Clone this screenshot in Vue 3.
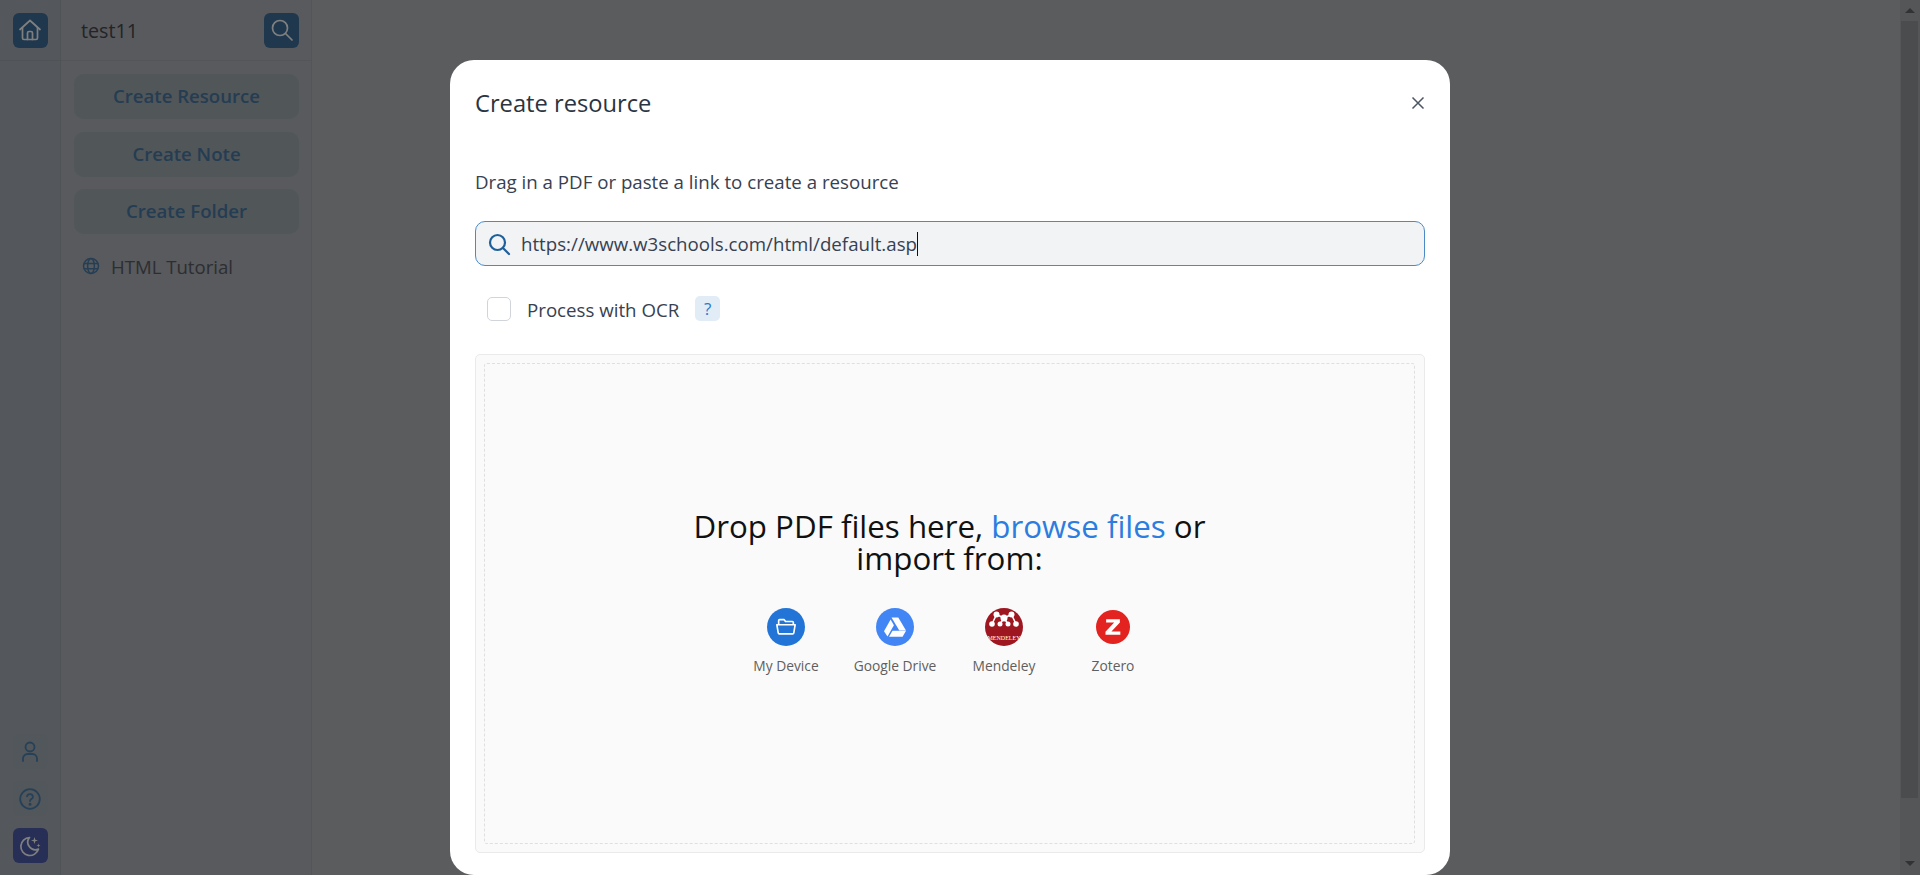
<template>
  <div class="page">
    <!-- left icon rail -->
    <aside class="rail">
      <div class="rail-top">
        <button class="rail-btn solid" aria-label="Home">
          <svg viewBox="0 0 24 24" width="24" height="24" fill="none" stroke="#fff" stroke-width="1.7" stroke-linejoin="round" stroke-linecap="round">
            <path d="M2 11.5 12 2.500l10 9" />
            <path d="M4.500 9.500V20a1.500 1.500 0 0 0 1.500 1.500h12a1.500 1.500 0 0 0 1.500-1.500V9.500" />
            <path d="M9.500 21.500V15a1.500 1.500 0 0 1 1.500-1.500h2a1.500 1.500 0 0 1 1.500 1.500v6.500" />
          </svg>
        </button>
      </div>
      <div class="rail-bottom">
        <button class="rail-btn soft" aria-label="Account">
          <svg viewBox="0 0 24 24" width="24" height="24" fill="none" stroke="#4d80ae" stroke-width="1.8" stroke-linecap="round">
            <circle cx="12" cy="7" r="4.500" />
            <path d="M5 21v-2.500A4.500 4.500 0 0 1 9.500 14h5a4.500 4.500 0 0 1 4.500 4.500V21" />
          </svg>
        </button>
        <button class="rail-btn soft" aria-label="Help">
          <svg viewBox="0 0 24 24" width="24" height="24" fill="none" stroke="#4d80ae" stroke-width="1.8" stroke-linecap="round">
            <circle cx="12" cy="12" r="9.800" />
            <path d="M9 9.300a3 3 0 0 1 5.900.6c0 2-2.900 2.300-2.900 4.100" />
            <circle cx="12" cy="17.200" r=".6" fill="#4d80ae" />
          </svg>
        </button>
        <button class="rail-btn moon" aria-label="Theme">
          <svg viewBox="0 0 24 24" width="24" height="24" fill="none" stroke="#fff" stroke-width="1.700" stroke-linejoin="round">
            <path d="M11.500 3.500a9 9 0 1 0 9 11.500 7.500 7.500 0 0 1-9-11.500Z" />
            <path d="M16.500 3l.8 2.700 2.700.8-2.700.8-.8 2.700-.8-2.700-2.700-.8 2.700-.8Z" fill="#fff" stroke="none" />
            <path d="M20.500 9.500l.5 1.500 1.500.5-1.500.5-.5 1.500-.5-1.500-1.500-.5 1.500-.5Z" fill="#fff" stroke="none" />
          </svg>
        </button>
      </div>
    </aside>

    <!-- library column -->
    <aside class="library">
      <header class="lib-head">
        <span class="lib-name">test11</span>
        <button class="rail-btn solid" aria-label="Search">
          <svg viewBox="0 0 24 24" width="24" height="24" fill="none" stroke="#fff" stroke-width="1.700" stroke-linecap="round">
            <circle cx="10" cy="10" r="7.500" />
            <path d="m15.500 15.500 6.500 6.500" />
          </svg>
        </button>
      </header>
      <div class="lib-body">
        <button v-for="label in actions" :key="label" class="lib-action">{{ label }}</button>
        <div class="lib-item">
          <svg viewBox="0 0 24 24" width="18" height="18" fill="none" stroke="#4a7ca8" stroke-width="2">
            <circle cx="12" cy="12" r="10" />
            <ellipse cx="12" cy="12" rx="4.500" ry="10" />
            <path d="M2.500 8.500h19M2.500 15.500h19" />
          </svg>
          <span>HTML Tutorial</span>
        </div>
      </div>
    </aside>

    <main class="content"></main>
    <div class="scrollbar">
      <span class="arrow up"></span>
      <span class="thumb"></span>
      <span class="arrow down"></span>
    </div>

    <div class="overlay">
      <section class="modal">
        <header class="modal-head">
          <h2>Create resource</h2>
          <button class="close" aria-label="Close">
            <svg viewBox="0 0 14 14" width="14" height="14" fill="none" stroke="#4b5563" stroke-width="1.500">
              <path d="m1.500 1.500 11 11M12.500 1.500l-11 11" />
            </svg>
          </button>
        </header>

        <p class="hint">Drag in a PDF or paste a link to create a resource</p>

        <div class="url-field">
          <svg viewBox="0 0 24 24" width="24" height="24" fill="none" stroke="#1f5f99" stroke-width="2.200" stroke-linecap="round">
            <circle cx="10.500" cy="10.500" r="7.500" />
            <path d="m16 16 6 6" />
          </svg>
          <span class="url-text">https://www.w3schools.com/html/default.asp</span><span class="caret"></span>
        </div>

        <label class="ocr">
          <span class="check"></span>
          <span class="ocr-text">Process with OCR</span>
          <span class="help">?</span>
        </label>

        <div class="dashboard">
          <div class="drop">
            <div class="drop-title">
              Drop PDF files here, <span class="browse">browse files</span> or import from:
            </div>
            <div class="sources">
              <div class="source">
                <span class="badge device">
                  <svg viewBox="0 0 24 24" width="22" height="22" fill="none" stroke="#fff" stroke-width="1.800" stroke-linejoin="round">
                    <path d="M4 9.500V5a1 1 0 0 1 1-1h5l1.500 2H19a1 1 0 0 1 1 1v2.500" />
                    <path d="M2 9.500h20l-1.500 9a1.200 1.200 0 0 1-1.200 1H4.700a1.200 1.200 0 0 1-1.200-1Z" />
                  </svg>
                </span>
                <span class="source-name">My Device</span>
              </div>
              <div class="source">
                <span class="badge drive">
                  <svg viewBox="0 0 24 24" width="24" height="24" fill="#fff">
                    <path d="M8.500 2.500h6.800l7.700 13h-6.700Z" />
                    <path d="M1 16.200 7.600 4.600l3.300 5.700L4.500 21.500Z" />
                    <path d="M9.500 15.800H23l-3.400 5.900H6Z" />
                  </svg>
                </span>
                <span class="source-name">Google Drive</span>
              </div>
              <div class="source">
                <span class="badge mendeley">
                  <svg viewBox="0 0 38 38" width="38" height="38" fill="#fff">
                    <circle cx="19" cy="14" r="3.500" />
                    <circle cx="11.500" cy="10.500" r="3" />
                    <circle cx="26.500" cy="10.500" r="3" />
                    <circle cx="7" cy="20" r="2.800" />
                    <circle cx="31" cy="20" r="2.800" />
                    <circle cx="15" cy="20" r="2.500" />
                    <circle cx="23" cy="20" r="2.500" />
                    <path d="m11.500 10.500 7.500 3.500 7.500-3.500M11.500 10.500 7 20M26.500 10.500 31 20M19 14l-4 6M19 14l4 6" stroke="#fff" stroke-width="1.600" fill="none" />
                  </svg>
                  <span class="mendeley-word">MENDELEY</span>
                </span>
                <span class="source-name">Mendeley</span>
              </div>
              <div class="source">
                <span class="badge zotero">
                  <svg viewBox="0 0 24 24" width="22" height="22" fill="#fff">
                    <path d="M4.500 3.500h15v3.600L10.300 17h9.700v3.500H3.800v-3.300L13.300 7H4.500Z" />
                  </svg>
                </span>
                <span class="source-name">Zotero</span>
              </div>
            </div>
          </div>
        </div>
      </section>
    </div>
  </div>
</template>

<script setup>
const actions = ['Create Resource', 'Create Note', 'Create Folder']
</script>

<style>
html, body { margin: 0; height: 100%; overflow: hidden; }
</style>

<style scoped>
.page { display: flex; width: 1920px; height: 875px; font-family: "Open Sans", "Liberation Sans", sans-serif; background: #b6b8bc; overflow: hidden; color: #1f2937; }
button { border: 0; padding: 0; background: none; font-family: inherit; }

.rail { width: 60px; flex-shrink: 0; display: flex; flex-direction: column; justify-content: space-between; background: #a8b0b8; border-right: 1px solid #a0a6ac; }
.rail-top { height: 61px; display: flex; align-items: center; justify-content: center; border-bottom: 1px solid #a0a6ac; box-sizing: border-box; }
.rail-bottom { display: flex; flex-direction: column; align-items: center; gap: 12px; padding-bottom: 12px; }
.rail-btn { width: 35px; height: 35px; border-radius: 6px; display: flex; align-items: center; justify-content: center; }
.rail-btn.solid { background: #41709c; }
.rail-btn.soft { background: #a4aeb6; }
.rail-btn.moon { background: #505fae; }

.library { width: 250px; flex-shrink: 0; display: flex; flex-direction: column; background: #b0b4ba; border-right: 1px solid #a6aab0; }
.lib-head { height: 61px; box-sizing: border-box; display: flex; align-items: center; justify-content: space-between; padding: 0 12px 0 20px; border-bottom: 1px solid #a6aab0; }
.lib-name { font-size: 19.7px; color: #46484e; }
.lib-body { display: flex; flex-direction: column; gap: 12.5px; padding: 13px 12px 0 13px; }
.lib-action { height: 45px; padding-bottom: 2px; border-radius: 10px; background: #a2acb2; color: #4a7aa6; font-size: 18.6px; font-weight: 600; }
.lib-item { display: flex; align-items: center; gap: 11px; padding: 0 0 2px 8px; font-size: 18.6px; color: #5a5c64; height: 39px; }

.content { flex: 1; }
.scrollbar { width: 20px; flex-shrink: 0; box-sizing: border-box; padding: 0 2px 0 1px; display: flex; flex-direction: column; align-items: center; background: #aaacb0; }
.thumb { height: 777px; width: 17px; background: #96989a; }
.arrow { width: 0; height: 0; flex-shrink: 0; border-left: 5px solid transparent; border-right: 5px solid transparent; }
.arrow.up { margin: 8px 0; border-bottom: 5px solid #646468; }
.arrow.down { margin: auto 0 9px; border-top: 5px solid #646468; }

.overlay { position: fixed; inset: 0; background: rgba(0, 0, 0, 0.5); display: flex; justify-content: center; padding: 60px 20px 0 0; box-sizing: border-box; }
.modal { width: 1000px; height: 815px; box-sizing: border-box; background: #fff; border-radius: 24px; padding: 0 25px 22px; display: flex; flex-direction: column; }
.modal-head { height: 85px; display: flex; align-items: center; justify-content: space-between; flex-shrink: 0; }
.modal-head h2 { margin: 0; font-size: 23.7px; font-weight: 400; color: #2b3440; }
.close { width: 14px; height: 14px; display: flex; }
.hint { margin: 25px 0 0; font-size: 18.7px; line-height: 24px; color: #374151; flex-shrink: 0; }
.url-field { height: 45px; margin-top: 27px; box-sizing: border-box; border: 1px solid #4a8bc7; border-radius: 10px; background: #f1f3f5; display: flex; align-items: center; padding-left: 11px; flex-shrink: 0; }
.url-text { margin-left: 10px; font-size: 18.7px; color: #374151; }
.caret { width: 1px; height: 24px; background: #111; }
.ocr { display: flex; align-items: center; height: 32px; margin-top: 27px; padding-left: 12px; flex-shrink: 0; }
.check { width: 24px; height: 24px; box-sizing: border-box; border: 1px solid #d1d5db; border-radius: 5px; background: #fff; }
.ocr-text { margin-left: 16px; font-size: 18.7px; color: #374151; }
.help { width: 25px; height: 25px; margin: -2px 0 0 16px; border-radius: 5px; background: #e1ecf7; color: #2b78c5; font-size: 17px; display: flex; align-items: center; justify-content: center; }

.dashboard { flex: 1; margin-top: 29px; padding: 8px 9px 8px 8px; box-sizing: border-box; display: flex; background: #fafafa; border: 1px solid #eaeaea; border-radius: 5px; }
.drop { flex: 1; border: 1px dashed #dfdfdf; border-radius: 3px; display: flex; flex-direction: column; align-items: center; padding-top: 146px; }
.drop-title { width: 560px; text-align: center; font-size: 31.3px; line-height: 32px; color: #111; }
.browse { color: #2b7de0; }
.sources { display: flex; margin-top: 34px; }
.source { width: 109px; display: flex; flex-direction: column; align-items: center; }
.badge { width: 38px; height: 38px; border-radius: 50%; display: flex; align-items: center; justify-content: center; position: relative; overflow: hidden; }
.device { background: #2275d7; }
.drive { background: #4285f4; }
.mendeley { background: #9d1620; }
.mendeley svg { margin-top: -8px; }
.mendeley-word { position: absolute; left: 0; right: 0; bottom: 5px; text-align: center; font-family: "Liberation Serif", serif; font-size: 6px; color: #fff; }
.zotero { width: 34px; height: 34px; margin: 2px 0; background: #e2231f; }
.source-name { margin-top: 10px; font-size: 13.8px; line-height: 20px; color: #5f5f5f; }
</style>
